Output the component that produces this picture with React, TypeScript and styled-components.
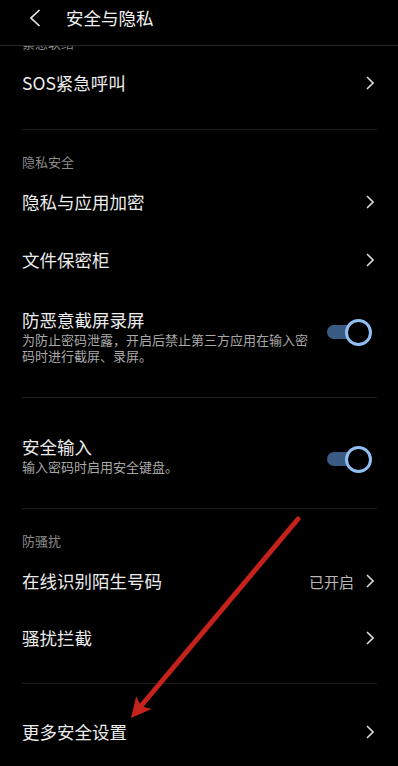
import type { FC } from 'react';
import styled, { createGlobalStyle } from 'styled-components';

const GlobalStyle = createGlobalStyle`
  html, body {
    margin: 0;
    padding: 0;
    background: #000;
  }
  body {
    font-family: "Noto Sans CJK SC", "Noto Sans", sans-serif;
    color: #e8e8e8;
  }
`;

const Screen = styled.div`
  position: relative;
  width: 398px;
  height: 766px;
  display: flex;
  flex-direction: column;
  background: #000;
  overflow: hidden;
`;

const Header = styled.header`
  height: 45px;
  flex: none;
  display: flex;
  align-items: center;
  gap: 25px;
  padding: 0 0 0 29px;
  border-bottom: 1px solid #262626;
  background: #000;
  box-sizing: content-box;
`;

const Title = styled.h1`
  margin: 0;
  font-size: 17.5px;
  font-weight: 400;
  line-height: 24px;
  color: #f0f0f0;
  margin-top: -9px;
`;

const BackIcon = styled.svg`
  margin-top: -9px;
  flex: none;
`;

const Scroller = styled.div`
  flex: 1;
  overflow: hidden;
`;

const List = styled.div`
  margin-top: -35px;
  padding: 0 21px 0 22px;
`;

const Section = styled.section<{ $top?: number }>`
  padding: ${({ $top = 0 }) => $top}px 0 17px;
  border-bottom: 1px solid #1e1e1e;
`;

const Label = styled.div`
  padding: 24px 0 3px;
  font-size: 13px;
  line-height: 16px;
  color: #8a8a8a;
`;

const Row = styled.div<{ $tall?: boolean; $h?: number }>`
  display: flex;
  align-items: ${({ $tall }) => ($tall ? 'flex-start' : 'center')};
  gap: 12px;
  min-height: ${({ $h = 58 }) => $h}px;
  padding: ${({ $tall }) => ($tall ? '19px 0 16px' : '0')};
  box-sizing: border-box;
`;

const TextCol = styled.div`
  flex: 1;
  min-width: 0;
`;

const RowTitle = styled.div`
  font-size: 17.5px;
  line-height: 24px;
  color: #ececec;
`;

const RowSub = styled.div`
  font-size: 13px;
  line-height: 16px;
  color: #a8a8a8;
  padding-right: 4px;
`;

const Value = styled.span`
  font-size: 15px;
  color: #b8b8b8;
`;

const Chevron = styled.svg`
  flex: none;
  margin-right: 3px;
`;

const Toggle = styled.div`
  position: relative;
  flex: none;
  width: 45px;
  height: 27px;
  margin: 11px 5px 0 0;
`;

const Track = styled.div`
  position: absolute;
  left: 0;
  top: 6px;
  width: 34px;
  height: 14px;
  border-radius: 7px;
  background: #3b5a84;
`;

const Knob = styled.div`
  position: absolute;
  right: 0;
  top: 0;
  width: 27px;
  height: 27px;
  box-sizing: border-box;
  border-radius: 50%;
  border: 3px solid #8fbff3;
  background: #000;
`;

const Annotation = styled.svg`
  position: absolute;
  left: 0;
  top: 0;
  pointer-events: none;
`;

const ChevronRight: FC = () => (
  <Chevron width="8" height="14" viewBox="0 0 8 14">
    <polyline
      points="1,1 7,7 1,13"
      fill="none"
      stroke="#d8d8d8"
      strokeWidth="1.6"
    />
  </Chevron>
);

const Switch: FC = () => (
  <Toggle>
    <Track />
    <Knob />
  </Toggle>
);

interface NavRowProps {
  title: string;
  value?: string;
  height?: number;
}

const NavRow: FC<NavRowProps> = ({ title, value, height }) => (
  <Row $h={height}>
    <TextCol>
      <RowTitle>{title}</RowTitle>
    </TextCol>
    {value && <Value>{value}</Value>}
    <ChevronRight />
  </Row>
);

interface SwitchRowProps {
  title: string;
  sub: string;
}

const SwitchRow: FC<SwitchRowProps> = ({ title, sub }) => (
  <Row $tall>
    <TextCol>
      <RowTitle>{title}</RowTitle>
      <RowSub>{sub}</RowSub>
    </TextCol>
    <Switch />
  </Row>
);

const App: FC = () => (
  <>
    <GlobalStyle />
    <Screen>
      <Header>
        <BackIcon width="12" height="18" viewBox="0 0 12 18">
          <polyline
            points="10.5,1 2,9 10.5,17"
            fill="none"
            stroke="#e8e8e8"
            strokeWidth="1.7"
          />
        </BackIcon>
        <Title>安全与隐私</Title>
      </Header>
      <Scroller>
        <List>
          <Section>
            <Label>紧急联络</Label>
            <NavRow title="SOS紧急呼叫" />
          </Section>
          <Section>
            <Label>隐私安全</Label>
            <NavRow title="隐私与应用加密" />
            <NavRow title="文件保密柜" />
            <SwitchRow
              title="防恶意截屏录屏"
              sub="为防止密码泄露，开启后禁止第三方应用在输入密码时进行截屏、录屏。"
            />
          </Section>
          <Section $top={18}>
            <SwitchRow title="安全输入" sub="输入密码时启用安全键盘。" />
          </Section>
          <Section>
            <Label>防骚扰</Label>
            <NavRow title="在线识别陌生号码" value="已开启" />
            <NavRow title="骚扰拦截" height={56} />
          </Section>
          <Section $top={19}>
            <NavRow title="更多安全设置" />
          </Section>
        </List>
      </Scroller>
      <Annotation width="398" height="766" viewBox="0 0 398 766">
        <line
          x1="298"
          y1="519"
          x2="141"
          y2="706"
          stroke="#c4221a"
          strokeWidth="5"
          strokeLinecap="round"
        />
        <polygon
          points="131,718 136.2,696.3 141,706 151.5,709.1"
          fill="#c4221a"
        />
      </Annotation>
    </Screen>
  </>
);

export default App;
